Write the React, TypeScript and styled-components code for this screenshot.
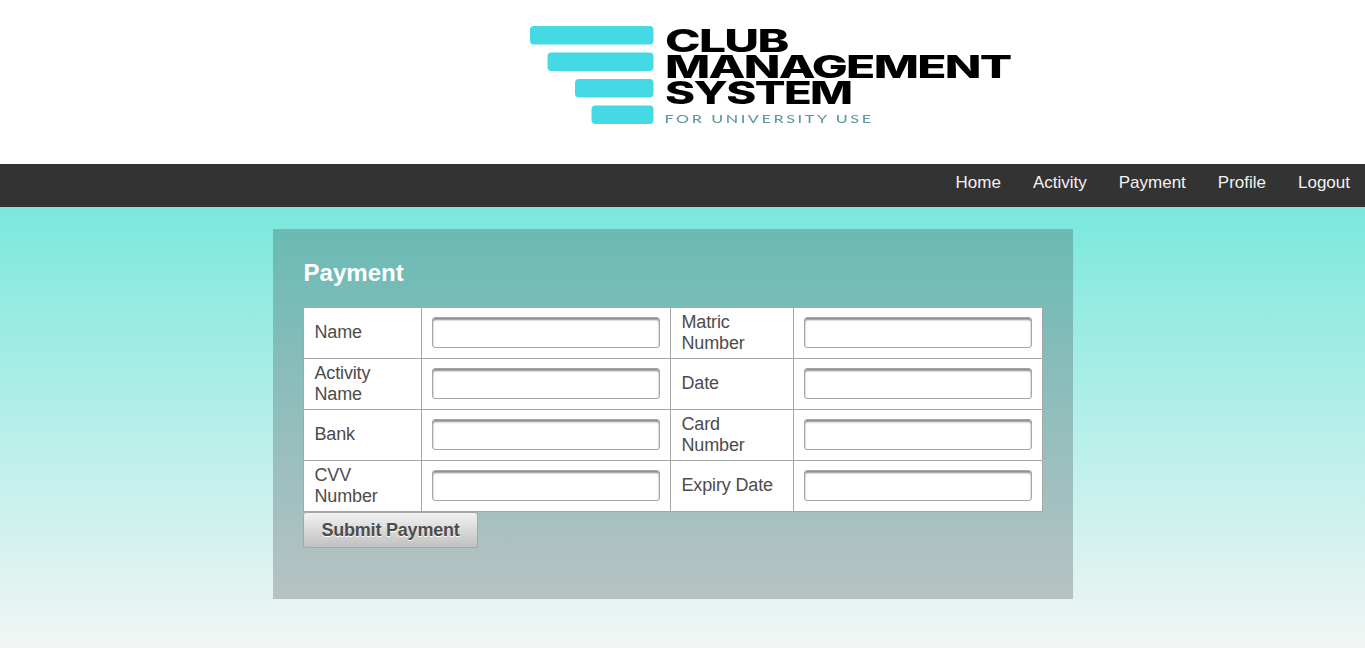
import React from "react";
import styled, { createGlobalStyle } from "styled-components";

const GlobalStyle = createGlobalStyle`
  * { box-sizing: border-box; }
  body {
    margin: 0;
    font-family: "Liberation Sans", Arial, sans-serif;
    background: #fff;
  }
`;

const Page = styled.div`
  display: flex;
  flex-direction: column;
  height: 648px;
  overflow: hidden;
`;

const Header = styled.header`
  height: 164px;
  flex: none;
  display: flex;
  justify-content: center;
  align-items: flex-start;
  padding: 20px 0 0 175px;
`;

const Logo = styled.svg`
  display: block;
  width: 500px;
  height: 112px;
  filter: blur(0.45px);
`;

const LogoTitle = styled.text`
  font-family: Inter, sans-serif;
  font-weight: 800;
  font-size: 31px;
  letter-spacing: -1.1px;
  fill: #000;
`;

const LogoTagline = styled.text`
  font-family: Lato, sans-serif;
  font-weight: 500;
  font-size: 12px;
  fill: #5f9a9f;
`;

const Nav = styled.nav`
  height: 43px;
  flex: none;
  display: flex;
  justify-content: flex-end;
  background: #333;
`;

const NavLink = styled.a`
  padding: 8px 16px 0;
  font-size: 17px;
  line-height: 21px;
  color: #f2f2f2;
  text-decoration: none;

  &:last-child {
    padding-right: 15px;
  }
`;

const Main = styled.main`
  flex: 1;
  padding: 22px 0 0 273px;
  background: linear-gradient(#7ae8dd, #f2f5f4);
`;

const Card = styled.section`
  width: 800px;
  height: 370px;
  padding: 30px;
  background: rgba(38, 32, 48, 0.235);
`;

const Title = styled.h2`
  margin: 0 0 20px;
  padding-left: 0.6px;
  font-size: 24px;
  line-height: 28px;
  color: #fff;
`;

const Fields = styled.div`
  display: grid;
  grid-template-columns: 117px 248px 122px 248px;
  grid-auto-rows: 50px;
  gap: 1px;
  width: 740px;
  padding: 1px;
  background: #a6a6a6;
`;

const Cell = styled.div`
  display: flex;
  align-items: center;
  padding: 0 10px 1px;
  background: #fff;
`;

const Label = styled.label`
  padding-left: 0.5px;
  font-size: 18px;
  line-height: 21px;
  letter-spacing: -0.15px;
  color: #4c4c4c;
`;

const Input = styled.input`
  width: 228px;
  height: 31px;
  margin: 0;
  padding: 0 6px;
  border: 1px solid #a6a6a6;
  border-radius: 3px;
  background: #fff;
  box-shadow: inset 0 2px 2px #8c8c8c;
  outline: none;
`;

const Submit = styled.button`
  display: block;
  width: 175px;
  height: 36px;
  padding: 1px 0 0;
  border: 1px solid #a6a6a6;
  border-radius: 3px;
  background: linear-gradient(#f2f2f2, #c1c1c1);
  font-family: inherit;
  font-size: 18px;
  font-weight: bold;
  letter-spacing: -0.2px;
  color: #4c4c4c;
  text-shadow: 0 1px 0 #fff;
`;

const links = ["Home", "Activity", "Payment", "Profile", "Logout"];

const fields = [
  "Name",
  "Matric Number",
  "Activity Name",
  "Date",
  "Bank",
  "Card Number",
  "CVV Number",
  "Expiry Date",
];

export default function App() {
  return (
    <>
      <GlobalStyle />
      <Page>
        <Header>
          <Logo viewBox="520 20 500 112" role="img" aria-label="Club Management System">
            <g fill="#45d9e6">
              <rect x="530" y="26" width="123.5" height="18.5" rx="4" />
              <rect x="547.5" y="52.5" width="106" height="18.5" rx="4" />
              <rect x="575" y="79" width="78.5" height="18.5" rx="4" />
              <rect x="591.5" y="105.5" width="62" height="18.5" rx="4" />
            </g>
            <LogoTitle x="665" y="51.5" textLength="122.5" lengthAdjust="spacingAndGlyphs">CLUB</LogoTitle>
            <LogoTitle x="665" y="77.5" textLength="345.5" lengthAdjust="spacingAndGlyphs">MANAGEMENT</LogoTitle>
            <LogoTitle x="665" y="103.5" textLength="186.5" lengthAdjust="spacingAndGlyphs">SYSTEM</LogoTitle>
            <g transform="translate(664.5 122.8) scale(1.35 1)">
              <LogoTagline textLength="153" lengthAdjust="spacing">FOR UNIVERSITY USE</LogoTagline>
            </g>
          </Logo>
        </Header>
        <Nav>
          {links.map((link) => (
            <NavLink key={link}>{link}</NavLink>
          ))}
        </Nav>
        <Main>
          <Card>
            <Title>Payment</Title>
            <Fields>
              {fields.map((field) => (
                <React.Fragment key={field}>
                  <Cell>
                    <Label htmlFor={field}>{field}</Label>
                  </Cell>
                  <Cell>
                    <Input id={field} />
                  </Cell>
                </React.Fragment>
              ))}
            </Fields>
            <Submit type="button">Submit Payment</Submit>
          </Card>
        </Main>
      </Page>
    </>
  );
}
